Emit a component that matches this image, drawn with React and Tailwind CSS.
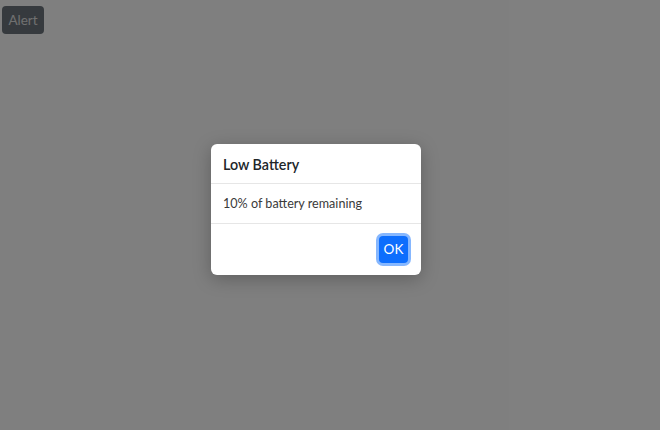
export default function App() {
  return (
    <div className="relative h-[430px] w-[660px] overflow-hidden bg-white" style={{ fontFamily: 'Lato, "Noto Sans", sans-serif' }}>
      <div className="p-[2px] pt-[6px]">
        <button className="h-[28px] w-[42px] rounded-[4px] bg-[#6c757d] pt-[1px] text-[13.5px] text-[#e0e0e0]">Alert</button>
      </div>
      <div className="absolute inset-0 flex items-center justify-center bg-black/50">
        <div className="mt-[-12px] ml-[-28px] w-[210px] rounded-[6px] bg-white shadow-[0_4px_18px_rgba(0,0,0,0.25)]">
          <div className="flex h-[40px] items-center border-b border-[#e6e6e6] px-[12px] pt-[3px]">
            <h2 className="text-[14.3px] font-semibold text-[#212529]">Low Battery</h2>
          </div>
          <div className="flex h-[40px] items-center border-b border-[#e6e6e6] px-[12px] pt-[3px]">
            <p className="text-[12.6px] text-[#3a3a3a]">10% of battery remaining</p>
          </div>
          <div className="flex h-[51px] items-center justify-end px-[13px]">
            <button className="h-[27px] w-[29px] rounded-[4px] bg-[#0d6efd] pt-[1px] text-[13.5px] text-white ring-[3px] ring-[#86b7fe]">OK</button>
          </div>
        </div>
      </div>
    </div>
  );
}
